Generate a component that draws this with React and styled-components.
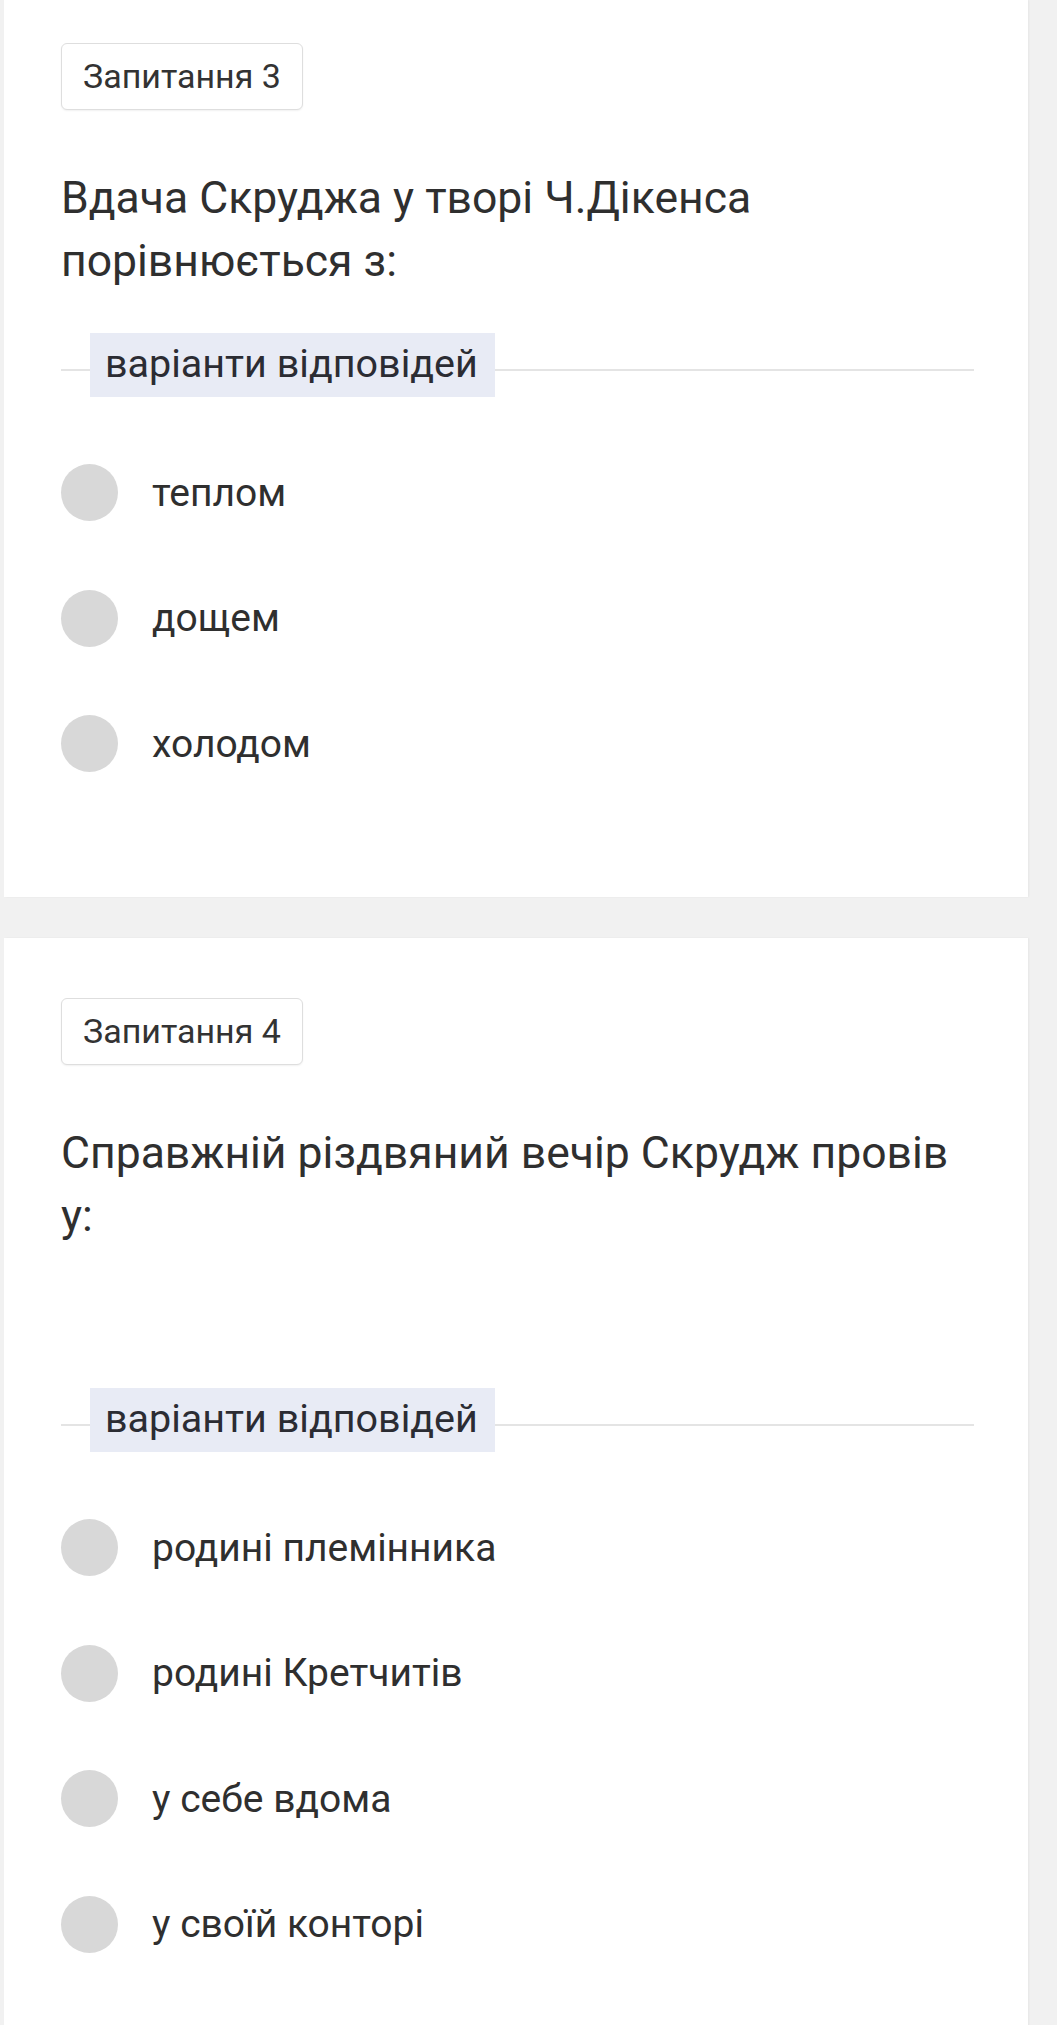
import styled, { createGlobalStyle } from 'styled-components';

const GlobalStyle = createGlobalStyle`
  html, body {
    margin: 0;
    padding: 0;
    background: #f1f1f1;
    font-family: Roboto, "Noto Sans", sans-serif;
    color: #333333;
  }
`;

const Page = styled.main`
  display: flex;
  flex-direction: column;
  gap: 41px;
  padding-left: 4px;
  width: 1024px;
`;

const Card = styled.section`
  background: #ffffff;
  padding: ${p => (p.$first ? '43px' : '60px')} 54px 125px 57px;
  box-shadow: 1px 0 2px rgba(0, 0, 0, 0.05);
`;

const Badge = styled.div`
  display: inline-block;
  padding: 15px 21px;
  font-size: 34px;
  line-height: 35px;
  color: #333333;
  background: #ffffff;
  border: 1px solid #dedede;
  border-radius: 6px;
  box-shadow: 0 1px 2px rgba(0, 0, 0, 0.06);
`;

const Question = styled.p`
  margin: 57px 0 ${p => (p.$extra ? '140px' : '40px')};
  font-size: 44.5px;
  line-height: 63px;
  color: #2f2f2f;
`;

const Divider = styled.div`
  display: flex;
  background: linear-gradient(#e4e4e4, #e4e4e4) no-repeat 0 36px / 100% 2px;
`;

const Legend = styled.span`
  margin-left: 29px;
  padding: 0 17px 0 15px;
  height: 64px;
  line-height: 62px;
  font-size: 39.5px;
  color: #2b2c33;
  background: #e8ebf5;
`;

const Options = styled.ul`
  list-style: none;
  margin: 0;
  padding: 67px 0 0;
  display: flex;
  flex-direction: column;
  gap: 68.5px;
`;

const Option = styled.li`
  display: flex;
  align-items: center;
  gap: 34px;
  height: 57px;
  font-size: 39px;
  color: #2f2f2f;
`;

const Radio = styled.span`
  flex: none;
  width: 57px;
  height: 57px;
  border-radius: 50%;
  background: #d8d8d8;
`;

const questions = [
  {
    num: 3,
    text: 'Вдача Скруджа у творі Ч.Дікенса порівнюється з:',
    options: ['теплом', 'дощем', 'холодом'],
  },
  {
    num: 4,
    text: 'Справжній різдвяний вечір Скрудж провів у:',
    extra: true,
    options: ['родині племінника', 'родині Кретчитів', 'у себе вдома', 'у своїй конторі'],
  },
];

export default function App() {
  return (
    <>
      <GlobalStyle />
      <Page>
        {questions.map((q, i) => (
          <Card key={q.num} $first={i === 0}>
            <Badge>Запитання {q.num}</Badge>
            <Question $extra={q.extra}>{q.text}</Question>
            <Divider>
              <Legend>варіанти відповідей</Legend>
            </Divider>
            <Options>
              {q.options.map(o => (
                <Option key={o}>
                  <Radio />
                  {o}
                </Option>
              ))}
            </Options>
          </Card>
        ))}
      </Page>
    </>
  );
}
